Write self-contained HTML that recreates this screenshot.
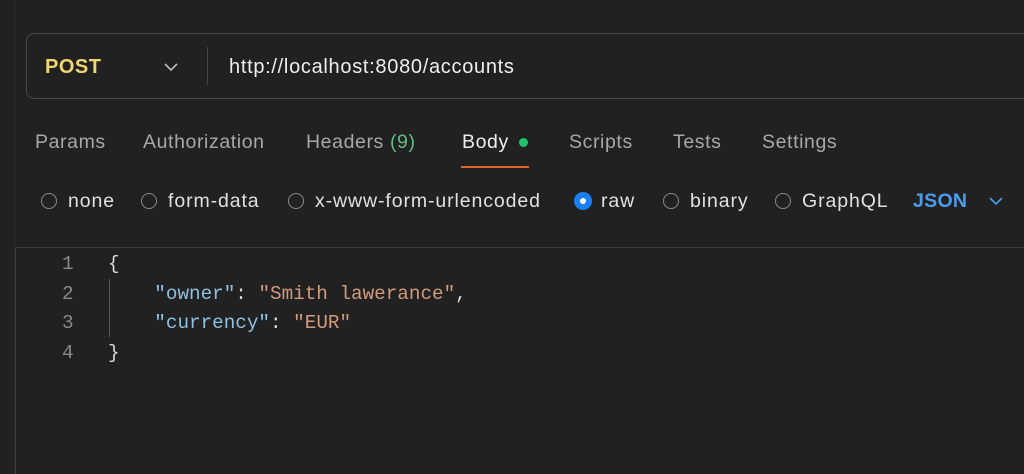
<!DOCTYPE html>
<html><head><style>
body{margin:0;width:1024px;height:474px;background:#212121;overflow:hidden;font-family:"Liberation Sans",sans-serif;position:relative;color:#e6e6e6}
.a{position:absolute;white-space:nowrap}
.url{left:26px;top:33px;width:1010px;height:66px;border:1.5px solid #4a4a4a;border-radius:8px;box-sizing:border-box}
.tab{top:131px;font-size:19.5px;color:#a8a8a8;letter-spacing:0.6px}
.r{top:190px;font-size:19.5px;color:#e0e0e0;letter-spacing:0.9px}
.c{width:16px;height:16px;border:1.5px solid #8a8a8a;border-radius:50%;box-sizing:border-box;top:193px}
.code{font-family:"Liberation Mono",monospace;font-size:19.3px;line-height:29.5px}
.k{color:#8fc1e3}.s{color:#d39a7c}
</style></head><body>
<div class="a" style="left:14px;top:0;width:1px;height:474px;background:#2c2c2c"></div>
<div class="a url"></div>
<div class="a" style="left:45px;top:56px;font-size:20px;font-weight:bold;color:#f0d574;letter-spacing:0.5px">POST</div>
<svg class="a" style="left:163px;top:62px" width="16" height="10"><path d="M2 2l6 6 6-6" stroke="#bbb" stroke-width="1.6" fill="none"/></svg>
<div class="a" style="left:207px;top:47px;width:1px;height:38px;background:#444"></div>
<div class="a" style="left:229px;top:56px;font-size:20px;color:#eee;letter-spacing:0.7px">http://localhost:8080/accounts</div>
<div class="a tab" style="left:35px">Params</div>
<div class="a tab" style="left:143px">Authorization</div>
<div class="a tab" style="left:306px">Headers <span style="color:#5fbf7f">(9)</span></div>
<div class="a tab" style="left:462px;color:#eee">Body</div>
<div class="a" style="left:519px;top:138px;width:9px;height:9px;border-radius:50%;background:#1fc36a"></div>
<div class="a" style="left:461px;top:166px;width:68px;height:2px;background:#e5602f"></div>
<div class="a tab" style="left:569px">Scripts</div>
<div class="a tab" style="left:673px">Tests</div>
<div class="a tab" style="left:762px">Settings</div>
<div class="a c" style="left:41px"></div><div class="a r" style="left:68px">none</div>
<div class="a c" style="left:141px"></div><div class="a r" style="left:168px">form-data</div>
<div class="a c" style="left:288px"></div><div class="a r" style="left:315px">x-www-form-urlencoded</div>
<div class="a" style="left:574px;top:192px;width:18px;height:18px;border-radius:50%;background:#1a7ff0"></div>
<div class="a" style="left:580px;top:198px;width:6px;height:6px;border-radius:50%;background:#fff"></div>
<div class="a r" style="left:601px">raw</div>
<div class="a c" style="left:663px"></div><div class="a r" style="left:690px">binary</div>
<div class="a c" style="left:775px"></div><div class="a r" style="left:802px">GraphQL</div>
<div class="a r" style="left:913px;color:#4a9ef0;font-weight:bold;letter-spacing:0.3px">JSON</div>
<svg class="a" style="left:988px;top:196px" width="16" height="10"><path d="M2 2l6 6 6-6" stroke="#4a9ef0" stroke-width="1.6" fill="none"/></svg>
<div class="a" style="left:15px;top:247px;width:1009px;height:1px;background:#3a3a3a"></div>
<div class="a" style="left:15px;top:247px;width:1px;height:227px;background:#3a3a3a"></div>
<div class="a code" style="left:62px;top:250px;color:#8a8a8a">1<br>2<br>3<br>4</div>
<div class="a" style="left:109px;top:279px;width:1px;height:58px;background:#555"></div>
<div class="a code" style="left:108px;top:250px;color:#d8d8d8">{<br>&nbsp;&nbsp;&nbsp;&nbsp;<span class="k">"owner"</span>: <span class="s">"Smith lawerance"</span>,<br>&nbsp;&nbsp;&nbsp;&nbsp;<span class="k">"currency"</span>: <span class="s">"EUR"</span><br>}</div>
</body></html>
